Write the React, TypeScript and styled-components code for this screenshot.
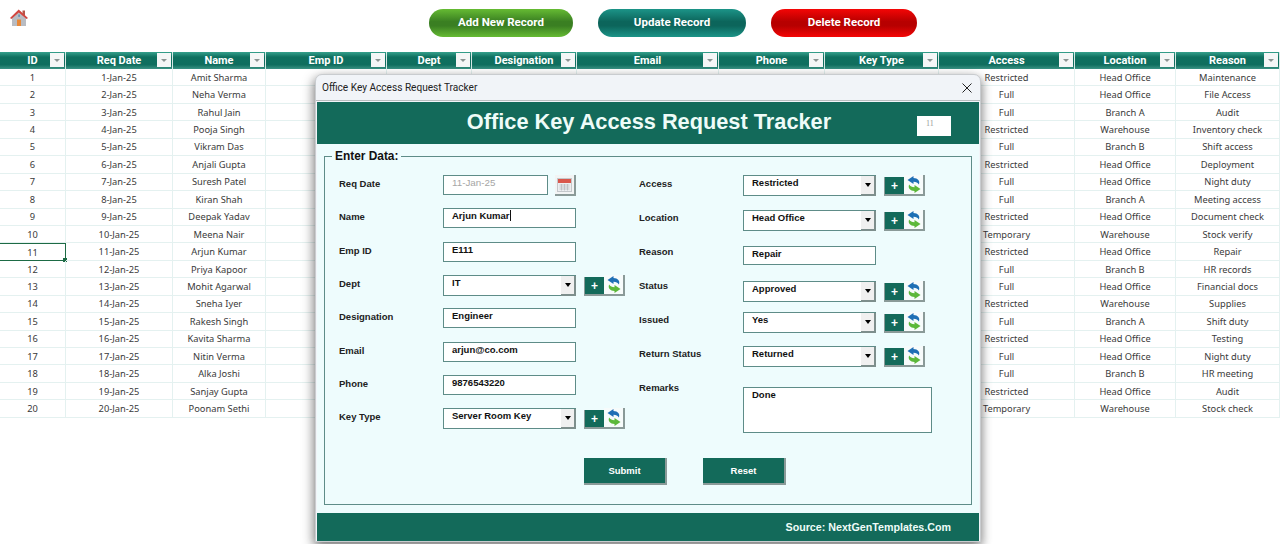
import React from 'react';
import styled, { createGlobalStyle } from 'styled-components';

const Global = createGlobalStyle`
  html, body { margin: 0; padding: 0; background: #fff; }
  body { width: 1280px; height: 544px; overflow: hidden; font-family: "Noto Sans", sans-serif; }
  * { box-sizing: border-box; }
`;

const Page = styled.div`
  position: relative;
  width: 1280px;
  height: 544px;
  overflow: hidden;
  background: #fff;
`;
const TopBar = styled.div`
  display: flex;
  align-items: flex-start;
  height: 52px;
  padding: 8px 0 0 9px;
`;
const HomeLink = styled.div`
  width: 20px;
  height: 20px;
  margin-right: 400px;
`;
const Actions = styled.div`
  display: flex;
  gap: 25px;
`;
const tones = {
  green: ['#66bb33', '#3a7f22'],
  teal: ['#1c9488', '#0c655b'],
  red: ['#f40606', '#b70000'],
};
const Pill = styled.div<{ $tone: keyof typeof tones; $w: number }>`
  width: ${p => p.$w}px;
  height: 28px;
  margin-top: 1px;
  padding-bottom: 2px;
  border-radius: 14px;
  display: flex;
  align-items: center;
  justify-content: center;
  color: #fff;
  font: 700 11.5px Roboto, sans-serif;
  background: linear-gradient(180deg, ${p => tones[p.$tone][0]} 0%, ${p => tones[p.$tone][1]} 45%, ${p => tones[p.$tone][1]} 60%, ${p => tones[p.$tone][0]} 100%);
`;
const Sheet = styled.div`
  display: grid;
  grid-template-columns: 66px 107px 93px 121px 85px 105px 142px 106px 114px 136px 101px 104px;
  grid-template-rows: 17px;
  grid-auto-rows: 17.45px;
`;
const HeadCell = styled.div`
  position: relative;
  display: flex;
  align-items: center;
  justify-content: center;
  padding-bottom: 1px;
  color: #fff;
  font: 700 11px Roboto, sans-serif;
  border-right: 1px solid #d7e9e6;
  background: linear-gradient(180deg, #35a08c 0%, #0f705f 30%, #0f6e5e 75%, #3b9384 100%);
`;
const FilterButton = styled.span`
  position: absolute;
  right: 1px;
  top: 1px;
  width: 14px;
  height: 14px;
  background: #f4f6f6;
  display: flex;
  align-items: center;
  justify-content: center;
  &::after {
    content: "";
    border-left: 3px solid transparent;
    border-right: 3px solid transparent;
    border-top: 3px solid #8a9492;
  }
`;
const Cell = styled.div<{ $active?: boolean }>`
  position: relative;
  display: flex;
  align-items: center;
  justify-content: center;
  font: 400 9.3px "Noto Sans", sans-serif;
  color: #3a3a3a;
  white-space: nowrap;
  border-right: 1px solid #e4f1f0;
  border-bottom: 1px solid #e4f1f0;
  ${p => p.$active ? 'border: 1.5px solid #1d6b45; border-left: 0;' : ''}
`;
const Handle = styled.span`
  position: absolute;
  right: -2px;
  bottom: -2px;
  width: 4px;
  height: 4px;
  background: #1d6b45;
`;

const Modal = styled.div`
  position: absolute;
  left: 315px;
  top: 74px;
  width: 666px;
  height: 468px;
  display: flex;
  flex-direction: column;
  background: #f1f4f8;
  border: 1px solid #c9cccf;
  border-radius: 7px 7px 0 0;
  box-shadow: -2px 4px 12px rgba(0, 0, 0, 0.4), 2px 4px 10px rgba(0, 0, 0, 0.25);
`;
const TitleBar = styled.div`
  height: 26px;
  flex: none;
  display: flex;
  align-items: center;
  justify-content: space-between;
  padding: 0 8px 0 6px;
  font: 400 10.1px Roboto, sans-serif;
  color: #222;
  border-bottom: 1px solid #b9bdbf;
`;
const Client = styled.div`
  flex: 1;
  display: flex;
  flex-direction: column;
  margin: 1px 1px 0;
  background: #eefcfd;
`;
const Banner = styled.div`
  position: relative;
  height: 42px;
  flex: none;
  display: flex;
  align-items: center;
  justify-content: center;
  padding: 0 0 2px 2px;
  background: #136a5a;
  color: #eefcf8;
  font: 700 21.75px "Liberation Sans", sans-serif;
`;
const IdBox = styled.div`
  position: absolute;
  left: 600px;
  top: 14px;
  width: 34px;
  height: 20px;
  padding: 3px 0 0 9px;
  background: #fff;
  color: #999;
  font: 400 8px "Liberation Serif", serif;
`;
const FormArea = styled.div`
  flex: 1;
  padding: 6px 7px 8px;
  display: flex;
`;
const Group = styled.fieldset`
  flex: 1;
  margin: 0;
  min-width: 0;
  padding: 12px 14px 0;
  border: 1px solid #5e8c88;
`;
const GroupTitle = styled.legend`
  padding: 0 3px;
  margin-left: -7px;
  height: 13px;
  font: 700 11.9px/13px "Liberation Sans", sans-serif;
  color: #111;
`;
const Columns = styled.div`
  display: grid;
  grid-template-columns: 300px 1fr;
`;
const FieldColumn = styled.div<{ $pitch: number }>`
  display: flex;
  flex-direction: column;
  height: 254px;
  & > * { flex: none; }
  & > * + * { margin-top: ${p => p.$pitch}px; }
`;
const FieldRow = styled.div`
  display: flex;
  align-items: flex-start;
  height: 20px;
`;
const Label = styled.div`
  width: 104px;
  padding-top: 3px;
  font: 700 9.5px/12px "Liberation Sans", sans-serif;
  color: #222;
`;
const Box = styled.div<{ $w?: number; $h?: number; $muted?: boolean; $top?: number }>`
  display: flex;
  flex: none;
  width: ${p => p.$w ?? 133}px;
  height: ${p => p.$h ?? 20}px;
  margin-top: ${p => p.$top ?? 0}px;
  padding: 1px 0 0 8px;
  background: #fff;
  border: 1px solid #5e8c88;
  font: 700 9.5px/11px "Liberation Sans", sans-serif;
  color: ${p => p.$muted ? '#a5a5a5' : '#111'};
  ${p => p.$muted ? 'font-weight: 400; font-size: 9.8px;' : ''}
`;
const Caret = styled.span`
  display: inline-block;
  width: 1px;
  height: 11px;
  background: #111;
`;
const ChoiceWrap = styled.div<{ $top: number }>`
  display: flex;
  margin-top: ${p => p.$top}px;
`;
const Select = styled.div`
  position: relative;
  display: flex;
  width: 133px;
  height: 21px;
  padding: 1px 0 0 8px;
  background: #fff;
  border: 1px solid #5e8c88;
  font: 700 9.5px/11px "Liberation Sans", sans-serif;
  color: #111;
`;
const SelectArrow = styled.span`
  position: absolute;
  right: -1px;
  top: 0;
  bottom: -1px;
  width: 15px;
  display: flex;
  align-items: center;
  justify-content: center;
  background: #f0f0f0;
  border-right: 2px solid #7d8e8c;
  border-bottom: 2px solid #7d8e8c;
  &::after {
    content: "";
    border-left: 3.5px solid transparent;
    border-right: 3.5px solid transparent;
    border-top: 4px solid #000;
  }
`;
const IconGroup = styled.div`
  display: flex;
  align-items: flex-end;
  margin: 0 0 0 8px;
`;
const PlusButton = styled.div`
  width: 20px;
  height: 19px;
  display: flex;
  align-items: center;
  justify-content: center;
  background: #136a5a;
  color: #fff;
  font: 700 12px/1 "Liberation Sans", sans-serif;
  border-bottom: 2px solid #8a9a98;
  border-left: 1px solid #8a9a98;
`;
const SwapButton = styled.div`
  width: 21px;
  height: 21px;
  display: flex;
  align-items: center;
  justify-content: center;
  background: #f7fbfb;
  border-right: 2px solid #8a9a98;
  border-bottom: 2px solid #8a9a98;
`;
const DateButton = styled.div`
  width: 21px;
  height: 21px;
  margin-left: 7px;
  display: flex;
  align-items: center;
  justify-content: center;
  background: #f2f4f4;
  border-right: 2px solid #8a9a98;
  border-bottom: 2px solid #8a9a98;
`;
const FormActions = styled.div`
  display: flex;
  justify-content: flex-start;
  gap: 36px;
  padding-left: 245px;
  margin-top: 29px;
`;
const ActionButton = styled.div`
  width: 83px;
  height: 27px;
  display: flex;
  align-items: center;
  justify-content: center;
  background: #136a5a;
  color: #fff;
  font: 700 9.5px "Liberation Sans", sans-serif;
  border-right: 2px solid #8a9a98;
  border-bottom: 2px solid #8a9a98;
`;
const Footer = styled.div`
  height: 28px;
  flex: none;
  display: flex;
  align-items: center;
  justify-content: flex-end;
  padding-right: 28px;
  background: #136a5a;
  color: #eefcf8;
  font: 700 10.7px "Liberation Sans", sans-serif;
`;

const columns = ['ID', 'Req Date', 'Name', 'Emp ID', 'Dept', 'Designation', 'Email', 'Phone', 'Key Type', 'Access', 'Location', 'Reason'];
const names = ['Amit Sharma', 'Neha Verma', 'Rahul Jain', 'Pooja Singh', 'Vikram Das', 'Anjali Gupta', 'Suresh Patel', 'Kiran Shah', 'Deepak Yadav', 'Meena Nair', 'Arjun Kumar', 'Priya Kapoor', 'Mohit Agarwal', 'Sneha Iyer', 'Rakesh Singh', 'Kavita Sharma', 'Nitin Verma', 'Alka Joshi', 'Sanjay Gupta', 'Poonam Sethi'];
const access = ['Restricted', 'Full', 'Full', 'Restricted', 'Full', 'Restricted', 'Full', 'Full', 'Restricted', 'Temporary', 'Restricted', 'Full', 'Full', 'Restricted', 'Full', 'Restricted', 'Full', 'Full', 'Restricted', 'Temporary'];
const places = ['Head Office', 'Head Office', 'Branch A', 'Warehouse', 'Branch B', 'Head Office', 'Head Office', 'Branch A', 'Head Office', 'Warehouse', 'Head Office', 'Branch B', 'Head Office', 'Warehouse', 'Branch A', 'Head Office', 'Head Office', 'Branch B', 'Head Office', 'Warehouse'];
const reasons = ['Maintenance', 'File Access', 'Audit', 'Inventory check', 'Shift access', 'Deployment', 'Night duty', 'Meeting access', 'Document check', 'Stock verify', 'Repair', 'HR records', 'Financial docs', 'Supplies', 'Shift duty', 'Testing', 'Night duty', 'HR meeting', 'Audit', 'Stock check'];

const HomeIcon = () => (
  <svg width="20" height="20" viewBox="0 0 20 20">
    <rect x="13.5" y="2.5" width="2.5" height="5" fill="#b5564a" />
    <path d="M3 9.5 L10 3.5 L17 9.5 V18 H3 Z" fill="#b9bcc2" />
    <path d="M1 10 L9.7 1.6 L19 10 L17.6 11 L9.8 4.6 L2.4 11 Z" fill="#d2453f" />
    <rect x="8" y="11.5" width="4" height="6.5" fill="#e8893a" />
    <rect x="9.2" y="6.5" width="1.8" height="2.4" fill="#6e93b5" />
  </svg>
);
const SwapIcon = () => (
  <svg width="14" height="17" viewBox="0 0 14 17">
    <path d="M6.5 0 L0.5 4 L6.5 8 V5.8 C9 5.8 10.8 6.6 11.8 8.5 C13.5 5 10.8 2.2 6.5 2 Z" fill="#1f6fb5" />
    <path d="M7.5 17 L13.5 13 L7.5 9 V11.2 C5 11.2 3.2 10.4 2.2 8.5 C0.5 12 3.2 14.8 7.5 15 Z" fill="#5cb83a" />
  </svg>
);
const CalendarIcon = () => (
  <svg width="15" height="14" viewBox="0 0 15 14">
    <rect x="0.5" y="0.5" width="14" height="13" fill="#eceef0" stroke="#c4c8cb" />
    <rect x="1" y="1" width="13" height="4" fill="#d9574c" />
    <path d="M2.5 7 H12.5 M2.5 9 H12.5 M2.5 11 H12.5 M4.5 6 V12.5 M7.5 6 V12.5 M10.5 6 V12.5" stroke="#b4b8bc" strokeWidth="0.7" />
  </svg>
);
const CloseIcon = () => (
  <svg width="10" height="10" viewBox="0 0 10 10">
    <path d="M0.5 0.5 L9.5 9.5 M9.5 0.5 L0.5 9.5" stroke="#222" strokeWidth="1" />
  </svg>
);

const Choice = ({ value, top = 0 }: { value: string; top?: number }) => (
  <ChoiceWrap $top={top}>
    <Select>{value}<SelectArrow /></Select>
    <IconGroup>
      <PlusButton>+</PlusButton>
      <SwapButton><SwapIcon /></SwapButton>
    </IconGroup>
  </ChoiceWrap>
);

// Columns covered by the form in every row have nothing to show.
const hiddenColumn = (j: number) => j >= 3 && j <= 8;

export default function App() {
  return (
    <Page>
      <Global />
      <TopBar>
        <HomeLink><HomeIcon /></HomeLink>
        <Actions>
          <Pill $tone="green" $w={144}>Add New Record</Pill>
          <Pill $tone="teal" $w={148}>Update Record</Pill>
          <Pill $tone="red" $w={146}>Delete Record</Pill>
        </Actions>
      </TopBar>
      <Sheet>
        {columns.map(c => <HeadCell key={c}>{c}<FilterButton /></HeadCell>)}
        {names.map((name, i) => {
          const n = i + 1;
          const row = [String(n), `${n}-Jan-25`, name, '', '', '', '', '', '', access[i], places[i], reasons[i]];
          return row.map((v, j) => (
            <Cell key={j + '-' + i} $active={i === 10 && j === 0}>
              {hiddenColumn(j) ? null : v}
              {i === 10 && j === 0 && <Handle />}
            </Cell>
          ));
        })}
      </Sheet>
      <Modal>
        <TitleBar>
          <span>Office Key Access Request Tracker</span>
          <CloseIcon />
        </TitleBar>
        <Client>
          <Banner>
            Office Key Access Request Tracker
            <IdBox>11</IdBox>
          </Banner>
          <FormArea>
            <Group>
              <GroupTitle>Enter Data:</GroupTitle>
              <Columns>
                <FieldColumn $pitch={13.35}>
                  <FieldRow><Label>Req Date</Label><Box $w={105} $muted>11-Jan-25</Box><DateButton><CalendarIcon /></DateButton></FieldRow>
                  <FieldRow><Label>Name</Label><Box>Arjun Kumar<Caret /></Box></FieldRow>
                  <FieldRow><Label>Emp ID</Label><Box>E111</Box></FieldRow>
                  <FieldRow><Label>Dept</Label><Choice value="IT" /></FieldRow>
                  <FieldRow><Label>Designation</Label><Box>Engineer</Box></FieldRow>
                  <FieldRow><Label>Email</Label><Box>arjun@co.com</Box></FieldRow>
                  <FieldRow><Label>Phone</Label><Box>9876543220</Box></FieldRow>
                  <FieldRow><Label>Key Type</Label><Choice value="Server Room Key" /></FieldRow>
                </FieldColumn>
                <FieldColumn $pitch={14}>
                  <FieldRow><Label>Access</Label><Choice value="Restricted" /></FieldRow>
                  <FieldRow><Label>Location</Label><Choice value="Head Office" top={1} /></FieldRow>
                  <FieldRow><Label>Reason</Label><Box $h={19} $top={3}>Repair</Box></FieldRow>
                  <FieldRow><Label>Status</Label><Choice value="Approved" top={4} /></FieldRow>
                  <FieldRow><Label>Issued</Label><Choice value="Yes" top={1} /></FieldRow>
                  <FieldRow><Label>Return Status</Label><Choice value="Returned" top={1} /></FieldRow>
                  <FieldRow><Label>Remarks</Label><Box $w={189} $h={46} $top={8}>Done</Box></FieldRow>
                </FieldColumn>
              </Columns>
              <FormActions>
                <ActionButton>Submit</ActionButton>
                <ActionButton>Reset</ActionButton>
              </FormActions>
            </Group>
          </FormArea>
          <Footer>Source: NextGenTemplates.Com</Footer>
        </Client>
      </Modal>
    </Page>
  );
}
